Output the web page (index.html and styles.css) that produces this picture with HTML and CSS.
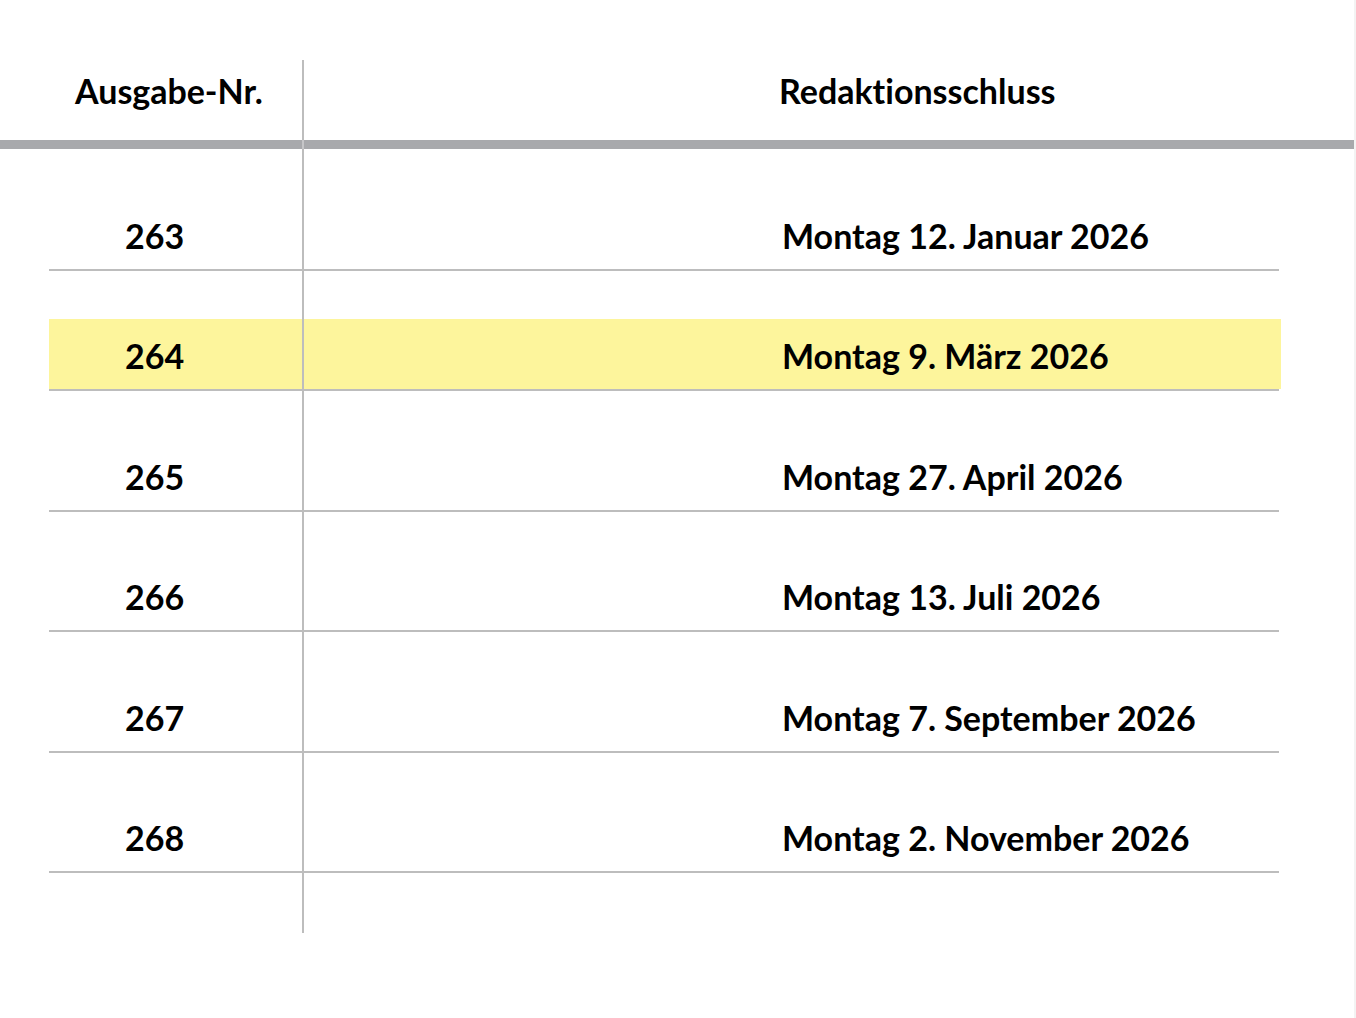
FILE: index.html
```html
<!DOCTYPE html>
<html lang="de">
<head>
<meta charset="utf-8">
<title>Redaktionsschluss</title>
<link rel="stylesheet" href="styles.css">
</head>
<body>
<div class="sheet">
  <div class="head">
    <div class="hc hc-num">Ausgabe-Nr.</div>
    <div class="hc hc-date">Redaktionsschluss</div>
  </div>
  <div class="rule"></div>
  <div class="rows">
    <div class="row first"><div class="c c-num">263</div><div class="c c-date">Montag 12. Januar 2026</div></div>
    <div class="row hl"><div class="c c-num">264</div><div class="c c-date">Montag 9. März 2026</div></div>
    <div class="row"><div class="c c-num">265</div><div class="c c-date">Montag 27. April 2026</div></div>
    <div class="row"><div class="c c-num">266</div><div class="c c-date">Montag 13. Juli 2026</div></div>
    <div class="row"><div class="c c-num">267</div><div class="c c-date">Montag 7. September 2026</div></div>
    <div class="row"><div class="c c-num">268</div><div class="c c-date">Montag 2. November 2026</div></div>
    <div class="row tail"><div class="c c-num"></div><div class="c c-date"></div></div>
  </div>
</div>
</body>
</html>
```
FILE: styles.css
```css
html {
  background: #f3f3f3;
}
body {
  margin: 0;
  width: 1354px;
  min-height: 100vh;
  background: #ffffff;
  font-family: "Lato", "Open Sans", sans-serif;
  font-weight: 700;
  font-size: 34px;
  color: #000;
  font-variant-ligatures: none;
}
.sheet {
  padding-top: 60px;
}
.head {
  display: flex;
  height: 80px;
}
.hc {
  box-sizing: border-box;
  padding-top: 11px;
  line-height: 40px;
  white-space: nowrap;
}
.hc-num {
  width: 304px;
  padding-left: 75px;
  border-right: 2px solid #bdbdbd;
}
.hc-date {
  flex: 1;
  padding-left: 475px;
}
.rule {
  height: 9px;
  background: linear-gradient(#c6c6c8, #c6c6c8) 302px 0 / 2px 100% no-repeat, #a8a9ac;
}
.rows {
  margin-left: 49px;
  width: 1230px;
}
.row {
  display: flex;
  box-sizing: border-box;
  height: 120.4px;
  border-bottom: 2px solid #bdbdbd;
}
.row.first {
  height: 122px;
}
.row.tail {
  height: 60px;
  border-bottom: 0;
}
.c {
  box-sizing: border-box;
  display: flex;
  align-items: flex-end;
  padding-bottom: 13px;
  line-height: 40px;
  white-space: nowrap;
}
.c-num {
  width: 255px;
  padding-left: 76px;
  border-right: 2px solid #bdbdbd;
}
.c-date {
  flex: 1;
  padding-left: 478px;
}
.row.hl .c {
  background: linear-gradient(#fdf59c, #fdf59c) left bottom / 100% 70px no-repeat;
}
.row.hl .c-date {
  margin-right: -2px;
}
```
